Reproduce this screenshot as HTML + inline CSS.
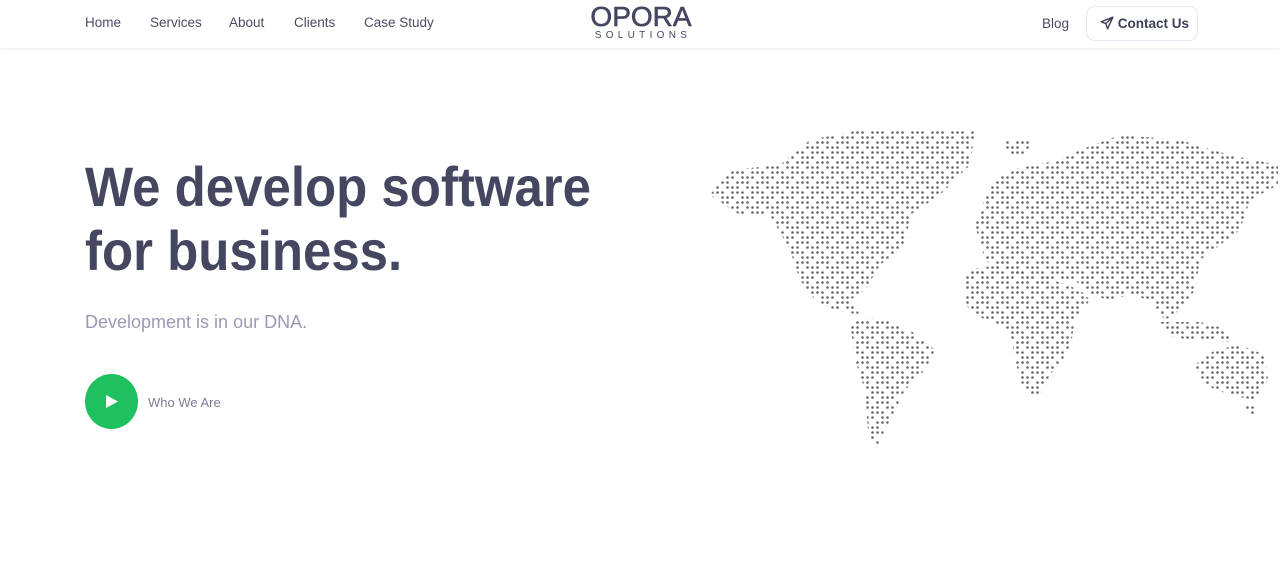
<!DOCTYPE html>
<html><head><meta charset="utf-8"><style>
*{margin:0;padding:0;box-sizing:border-box}
body{width:1280px;height:581px;background:#fff;font-family:"Liberation Sans",sans-serif;position:relative;overflow:hidden}
.hdr{position:absolute;left:0;top:0;width:1280px;height:48px;box-shadow:0 1px 3px rgba(0,0,0,.08);background:#fff}
.nav a{position:absolute;top:15px;font-size:13.5px;color:#4a4b63;text-decoration:none}
.logo{position:absolute;left:589px;top:3px;text-align:center;color:#454761;width:104px}
.logo .o{font-size:28px;letter-spacing:0px;line-height:28px;-webkit-text-stroke:0.6px #454761}
.logo .s{font-size:10px;letter-spacing:4.3px;line-height:10px;margin-left:4px}
.btn{position:absolute;left:1086px;top:6px;width:112px;height:35px;border:1px solid #e6e6ee;border-radius:9px;font-size:13.5px;font-weight:bold;color:#3e405a;padding:9px 0 0 13px}
h1{position:absolute;left:85px;top:155px;font-size:56px;line-height:64px;font-weight:bold;color:#454761;transform:scaleX(.91);transform-origin:0 0;white-space:nowrap}
.sub{position:absolute;left:85px;top:312px;font-size:18px;color:#9a9bb3}
.play{position:absolute;left:85px;top:374px;width:53px;height:55px;border-radius:50%;background:#1ec05f}
.who{position:absolute;left:148px;top:395px;font-size:13px;color:#7c7e98}
</style></head><body>
<div class="hdr">
<div class="nav"><a style="left:85px">Home</a><a style="left:150px">Services</a><a style="left:229px">About</a><a style="left:294px">Clients</a><a style="left:364px">Case Study</a><a style="left:1042px;top:16px">Blog</a></div>
<div class="logo"><div class="o">OPORA</div><div class="s">SOLUTIONS</div></div>
<div class="btn"><svg width="14" height="14" viewBox="0 0 24 24" fill="none" stroke="#3e405a" stroke-width="2.4" stroke-linejoin="round" style="vertical-align:-2px"><path d="M22 2L2 10l8 3 3 9z M10 13l12-11"/></svg> Contact Us</div>
</div>
<h1>We develop software<br>for business.</h1>
<div class="sub">Development is in our DNA.</div>
<div class="play"><svg width="53" height="55"><path d="M21 21 L33 27.5 L21 34z" fill="#fff"/></svg></div>
<div class="who">Who We Are</div>
<svg width="1280" height="581" style="position:absolute;left:0;top:0">
<defs><pattern id="d" x="0" y="0" width="20" height="20" patternUnits="userSpaceOnUse"><g fill="#666">
<circle cx="2.5" cy="2.5" r="1.3"/><circle cx="7.5" cy="2.5" r="1.3"/><circle cx="17.5" cy="2.5" r="1.3"/>
<circle cx="7.5" cy="7.5" r="1.3"/><circle cx="12.5" cy="7.5" r="1.3"/><circle cx="17.5" cy="7.5" r="1.3"/>
<circle cx="2.5" cy="12.5" r="1.3"/><circle cx="12.5" cy="12.5" r="1.3"/><circle cx="17.5" cy="12.5" r="1.3"/>
<circle cx="2.5" cy="17.5" r="1.3"/><circle cx="7.5" cy="17.5" r="1.3"/><circle cx="12.5" cy="17.5" r="1.3"/>
</g></pattern></defs>
<g fill="url(#d)">
<path d="M710,195 730,170 780,165 810,140 860,130 910,130 975,130 970,165 940,195 910,215 905,245 880,265 865,290 850,300 860,315 835,310 815,300 800,280 790,250 770,215 740,215z"/>
<path d="M850,320 880,318 910,330 935,350 925,370 905,390 895,410 885,430 875,450 868,430 865,390 855,360z"/>
<path d="M975,225 990,185 1010,170 1060,160 1080,150 1120,135 1180,140 1230,155 1278,165 1278,185 1250,200 1240,230 1220,245 1200,260 1195,290 1180,310 1165,320 1150,300 1130,295 1110,300 1090,295 1075,280 1040,280 1020,275 1000,270 985,260z"/>
<path d="M965,270 1000,265 1040,275 1080,290 1090,300 1075,320 1070,350 1050,375 1040,395 1025,395 1015,360 1010,330 985,320 965,305z"/>
<path d="M1195,365 1215,350 1240,345 1265,355 1268,380 1255,400 1230,395 1205,385z"/>
<path d="M1160,322 1200,322 1230,330 1230,342 1190,340 1165,335z"/>
<path d="M1005,140 1030,140 1030,155 1005,155z"/>
<path d="M1245,405 1256,405 1256,416 1245,416z"/>
</g></svg>
</body></html>
